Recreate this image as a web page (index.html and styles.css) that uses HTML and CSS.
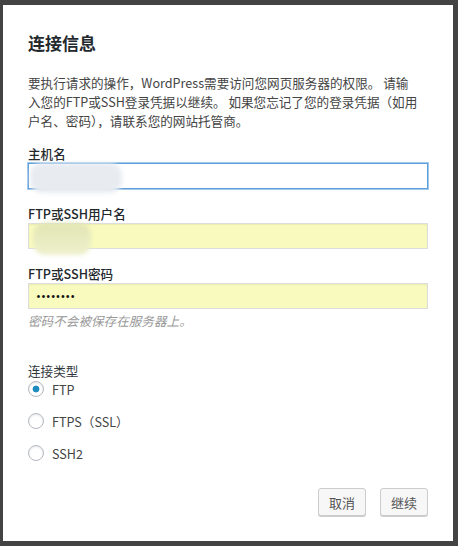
FILE: index.html
```html
<!DOCTYPE html>
<html>
<head>
    <meta charset="utf-8" />
    <title>连接信息</title>
    <link rel="stylesheet" href="styles.css">
</head>
<body>
    <div class="overlay">
        <div class="dialog">
            <h2 class="title">连接信息</h2>
            <p class="intro">要执行请求的操作，WordPress需要访问您网页服务器的权限。 请输<br>入您的FTP或SSH登录凭据以继续。 如果您忘记了您的登录凭据（如用<br>户名、密码），请联系您的网站托管商。</p>

            <div class="field first">
                <label for="hostname">主机名</label>
                <div class="box">
                    <input id="hostname" class="focused" type="text">
                    <span class="smudge smudge-host"></span>
                </div>
            </div>

            <div class="field">
                <label for="username">FTP或SSH用户名</label>
                <div class="box">
                    <input id="username" class="autofill" type="text">
                    <span class="smudge smudge-user"></span>
                </div>
            </div>

            <div class="field">
                <label for="password">FTP或SSH密码</label>
                <div class="box">
                    <input id="password" class="autofill secret" type="password" value="abcdefgh">
                </div>
                <p class="hint">密码不会被保存在服务器上。</p>
            </div>

            <div class="conn">
                <div class="conn-title">连接类型</div>
                <label class="radio-row"><input type="radio" name="type" checked> FTP</label>
                <label class="radio-row"><input type="radio" name="type"> FTPS（SSL）</label>
                <label class="radio-row"><input type="radio" name="type"> SSH2</label>
            </div>

            <div class="actions">
                <button class="btn">取消</button>
                <button class="btn">继续</button>
            </div>
        </div>
    </div>
</body>
</html>
```

FILE: styles.css
```css
body {
    margin: 0;
    background: #434343;
    font-family: "Noto Sans CJK SC", "Open Sans", sans-serif;
}

.overlay {
    padding: 5px 5px 5px 3px;
}

.dialog {
    background: #fff;
    width: 450px;
    height: 536px;
    box-sizing: border-box;
    padding: 26px 25px 25px 25px;
    display: flex;
    flex-direction: column;
}

.title {
    margin: 0;
    font-size: 17px;
    line-height: 24px;
    font-weight: bold;
    color: #23282d;
}

.intro {
    margin: 18px 0 0;
    font-size: 12.6px;
    line-height: 19px;
    color: #444;
}

.field {
    margin-top: 15px;
}

.field.first {
    margin-top: 14px;
}

.field label {
    display: block;
    font-size: 12.6px;
    line-height: 19px;
    font-weight: 500;
    color: #23282d;
}

.box {
    position: relative;
}

.box input {
    display: block;
    width: 100%;
    height: 26px;
    box-sizing: border-box;
    margin: 0;
    padding: 0 7px;
    border: 1px solid #ddd;
    box-shadow: inset 0 1px 2px rgba(0, 0, 0, 0.07);
    background: #fff;
    font-family: inherit;
    font-size: 13px;
    color: #32373c;
    outline: none;
}

.box input.focused {
    border-color: #5b9dd9;
    box-shadow: 0 0 0 1px rgba(91, 157, 217, 0.55);
}

.box input.autofill {
    background: #f9fbbe;
}

.box input.secret {
    font-family: "Open Sans", sans-serif;
    color: #111;
}

.smudge {
    position: absolute;
    border-radius: 12px;
    filter: blur(2px);
}

.smudge-host {
    left: 2px;
    top: 0;
    width: 92px;
    height: 30px;
    background: #e8ecf1;
}

.smudge-user {
    left: 5px;
    top: 0;
    width: 58px;
    height: 32px;
    background: linear-gradient(to bottom, #e2e5b3, #eff1cd);
}

.hint {
    margin: 2px 0 0;
    font-size: 12.6px;
    line-height: 19px;
    font-style: italic;
    color: #999;
}

.conn {
    margin-top: 31px;
}

.conn-title {
    font-size: 12.6px;
    line-height: 19px;
    color: #32373c;
}

.radio-row {
    display: flex;
    align-items: center;
    gap: 8px;
    height: 18px;
    margin-top: 14px;
    font-size: 12.6px;
    color: #444;
}

.conn-title + .radio-row {
    margin-top: 0;
}

.radio-row input {
    appearance: none;
    -webkit-appearance: none;
    width: 16px;
    height: 16px;
    margin: 0;
    border: 1px solid #b4b9be;
    border-radius: 50%;
    background: #fff;
    box-shadow: inset 0 1px 2px rgba(0, 0, 0, 0.1);
}

.radio-row input:checked {
    background: radial-gradient(circle, #1e8cbe 0 3px, #fff 3.8px);
}

.actions {
    margin-top: auto;
    display: flex;
    justify-content: flex-end;
    gap: 14px;
}

.btn {
    height: 28px;
    padding: 0 10px;
    border: 1px solid #ccc;
    border-radius: 3px;
    background: #f7f7f7;
    box-shadow: 0 1px 0 #ccc;
    font-family: inherit;
    font-size: 13px;
    color: #555;
}
```
